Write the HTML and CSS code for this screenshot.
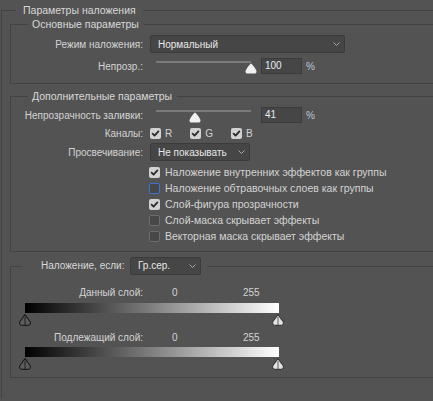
FILE: index.html
```html
<!DOCTYPE html>
<html lang="ru">
<head>
<meta charset="utf-8">
<title>Параметры наложения</title>
<link rel="stylesheet" href="styles.css">
</head>
<body>
<div class="dialog">
  <fieldset class="group outer">
    <legend class="legend legend-outer">Параметры наложения</legend>

    <fieldset class="group box box-general">
      <legend class="legend legend-box">Основные параметры</legend>
      <div class="row row-mode">
        <span class="label">Режим наложения:</span>
        <div class="select select-mode">
          <span>Нормальный</span>
          <svg class="chev" width="7" height="4" viewBox="0 0 7 4"><path d="M0.5 0.5 L3.5 3.5 L6.5 0.5" fill="none" stroke="#a9a9a9" stroke-width="1"/></svg>
        </div>
      </div>
      <div class="row row-slider">
        <span class="label">Непрозр.:</span>
        <div class="slider">
          <svg class="thumb" style="left:100%" width="12" height="11" viewBox="0 0 12 11"><path d="M6 0.5 C6.6 0.5 11.5 6.5 11.5 8.5 C11.5 10 10.6 10.5 9.5 10.5 L2.5 10.5 C1.4 10.5 0.5 10 0.5 8.5 C0.5 6.5 5.4 0.5 6 0.5Z" fill="#f0f0f0"/></svg>
        </div>
        <div class="field">100</div>
        <span class="unit">%</span>
      </div>
    </fieldset>

    <fieldset class="group box box-advanced">
      <legend class="legend legend-box">Дополнительные параметры</legend>
      <div class="row row-slider row-fill">
        <span class="label">Непрозрачность заливки:</span>
        <div class="slider">
          <svg class="thumb" style="left:41%" width="12" height="11" viewBox="0 0 12 11"><path d="M6 0.5 C6.6 0.5 11.5 6.5 11.5 8.5 C11.5 10 10.6 10.5 9.5 10.5 L2.5 10.5 C1.4 10.5 0.5 10 0.5 8.5 C0.5 6.5 5.4 0.5 6 0.5Z" fill="#f0f0f0"/></svg>
        </div>
        <div class="field">41</div>
        <span class="unit">%</span>
      </div>
      <div class="row row-channels">
        <span class="label">Каналы:</span>
        <div class="checks">
          <label class="check-item"><span class="cb on"><svg width="11" height="11" viewBox="0 0 11 11"><path d="M2.6 5.6 L4.6 7.6 L8.4 3.4" fill="none" stroke="#2a2a2a" stroke-width="1.8" stroke-linecap="round" stroke-linejoin="round"/></svg></span>R</label>
          <label class="check-item"><span class="cb on"><svg width="11" height="11" viewBox="0 0 11 11"><path d="M2.6 5.6 L4.6 7.6 L8.4 3.4" fill="none" stroke="#2a2a2a" stroke-width="1.8" stroke-linecap="round" stroke-linejoin="round"/></svg></span>G</label>
          <label class="check-item"><span class="cb on"><svg width="11" height="11" viewBox="0 0 11 11"><path d="M2.6 5.6 L4.6 7.6 L8.4 3.4" fill="none" stroke="#2a2a2a" stroke-width="1.8" stroke-linecap="round" stroke-linejoin="round"/></svg></span>B</label>
        </div>
      </div>
      <div class="row row-knockout">
        <span class="label">Просвечивание:</span>
        <div class="select select-knockout">
          <span>Не показывать</span>
          <svg class="chev" width="7" height="4" viewBox="0 0 7 4"><path d="M0.5 0.5 L3.5 3.5 L6.5 0.5" fill="none" stroke="#a9a9a9" stroke-width="1"/></svg>
        </div>
      </div>
      <div class="options">
        <label class="opt"><span class="cb on"><svg width="11" height="11" viewBox="0 0 11 11"><path d="M2.6 5.6 L4.6 7.6 L8.4 3.4" fill="none" stroke="#2a2a2a" stroke-width="1.8" stroke-linecap="round" stroke-linejoin="round"/></svg></span>Наложение внутренних эффектов как группы</label>
        <label class="opt"><span class="cb off focus"></span>Наложение обтравочных слоев как группы</label>
        <label class="opt"><span class="cb on"><svg width="11" height="11" viewBox="0 0 11 11"><path d="M2.6 5.6 L4.6 7.6 L8.4 3.4" fill="none" stroke="#2a2a2a" stroke-width="1.8" stroke-linecap="round" stroke-linejoin="round"/></svg></span>Слой-фигура прозрачности</label>
        <label class="opt"><span class="cb off"></span>Слой-маска скрывает эффекты</label>
        <label class="opt"><span class="cb off"></span>Векторная маска скрывает эффекты</label>
      </div>
    </fieldset>

    <fieldset class="group box box-blendif">
      <legend class="legend legend-blend">
        <span class="blend-inner">
          <span class="blend-label">Наложение, если:</span>
          <span class="select select-gray">
            <span>Гр.сер.</span>
            <svg class="chev" width="7" height="4" viewBox="0 0 7 4"><path d="M0.5 0.5 L3.5 3.5 L6.5 0.5" fill="none" stroke="#a9a9a9" stroke-width="1"/></svg>
          </span>
        </span>
      </legend>

      <div class="row row-level row-level-first">
        <span class="label">Данный слой:</span>
        <span class="val0">0</span>
        <span class="val255">255</span>
      </div>
      <div class="gradient"></div>
      <div class="thumbs">
        <svg width="12" height="12" viewBox="0 0 12 12"><path d="M6 0.6 L11.4 8 C11.6 10.2 10.6 11.4 9 11.4 L3 11.4 C1.4 11.4 0.4 10.2 0.6 8 Z" fill="#5c5c5c" stroke="#1c1c1c" stroke-width="1.1" stroke-linejoin="round"/><path d="M6 3 V11" stroke="#202020" stroke-width="1"/></svg>
        <svg width="12" height="12" viewBox="0 0 12 12"><path d="M6 0.6 L11.4 8 C11.6 10.2 10.6 11.4 9 11.4 L3 11.4 C1.4 11.4 0.4 10.2 0.6 8 Z" fill="#e4e4e4" stroke="#3a3a3a" stroke-width="1.1" stroke-linejoin="round"/><path d="M6 3 V11" stroke="#5a5a5a" stroke-width="1"/></svg>
      </div>

      <div class="row row-level">
        <span class="label">Подлежащий слой:</span>
        <span class="val0">0</span>
        <span class="val255">255</span>
      </div>
      <div class="gradient gradient-second"></div>
      <div class="thumbs">
        <svg width="12" height="12" viewBox="0 0 12 12"><path d="M6 0.6 L11.4 8 C11.6 10.2 10.6 11.4 9 11.4 L3 11.4 C1.4 11.4 0.4 10.2 0.6 8 Z" fill="#5c5c5c" stroke="#1c1c1c" stroke-width="1.1" stroke-linejoin="round"/><path d="M6 3 V11" stroke="#202020" stroke-width="1"/></svg>
        <svg width="12" height="12" viewBox="0 0 12 12"><path d="M6 0.6 L11.4 8 C11.6 10.2 10.6 11.4 9 11.4 L3 11.4 C1.4 11.4 0.4 10.2 0.6 8 Z" fill="#e4e4e4" stroke="#3a3a3a" stroke-width="1.1" stroke-linejoin="round"/><path d="M6 3 V11" stroke="#5a5a5a" stroke-width="1"/></svg>
      </div>
    </fieldset>
  </fieldset>
</div>
</body>
</html>
```

FILE: styles.css
```css
html, body {
  margin: 0;
  padding: 0;
  background: #535353;
  overflow: hidden;
}

body {
  width: 433px;
  height: 401px;
  font-family: "Liberation Sans", Arial, sans-serif;
  font-size: 10px;
  color: #d4d4d4;
}

.dialog {
  width: 433px;
}

.group {
  margin: 0;
  padding: 0;
  min-width: 0;
  border: 1px solid #434343;
  border-right: none;
}

.outer {
  margin: 3px 0 0 1px;
  padding: 0 0 20px 8px;
  border-bottom: none;
}

.legend {
  height: 14px;
  line-height: 14px;
  padding: 0;
  font-size: 10.5px;
  color: #d8d8d8;
  white-space: nowrap;
}

.legend-outer {
  margin-left: 6px;
  padding: 0 7px;
}

.legend-box {
  margin-left: 17px;
  padding: 0 5px 0 4px;
}

.box-general {
  padding-bottom: 9px;
}

.box-advanced {
  margin-top: 5px;
  padding-bottom: 7px;
}

.box-blendif {
  margin-top: 5px;
  padding-bottom: 7px;
}

.row {
  display: flex;
  align-items: center;
}

.label {
  flex: none;
  width: 132px;
  text-align: right;
  white-space: nowrap;
}

.row-mode {
  margin-top: 4px;
  height: 18px;
}

.select {
  box-sizing: border-box;
  height: 18px;
  display: flex;
  align-items: center;
  justify-content: space-between;
  padding: 0 4px 0 7px;
  background: #464646;
  border: 1px solid #3b3b3b;
  border-radius: 2px;
  color: #e8e8e8;
  white-space: nowrap;
}

.chev {
  flex: none;
}

.select-mode {
  width: 195px;
  margin-left: 7px;
}

.row-slider {
  margin-top: 5px;
  height: 16px;
}

.row-fill {
  margin-top: 4px;
}

.slider {
  position: relative;
  flex: none;
  width: 95px;
  height: 16px;
  margin-left: 13px;
}

.slider::before {
  content: "";
  position: absolute;
  left: 0;
  right: 0;
  top: 3px;
  height: 2px;
  background: #7a7a7a;
}

.thumb {
  position: absolute;
  top: 5px;
  margin-left: -6px;
}

.field {
  box-sizing: border-box;
  flex: none;
  width: 41px;
  height: 16px;
  margin-left: 10px;
  padding-left: 3px;
  line-height: 14px;
  background: #464646;
  border: 1px solid #3b3b3b;
  color: #e6edf8;
}

.unit {
  margin-left: 4px;
  color: #bcc8da;
}

.row-channels {
  margin-top: 3px;
  height: 14px;
}

.checks {
  display: flex;
  gap: 18px;
  margin-left: 7px;
}

.check-item {
  display: flex;
  align-items: center;
  gap: 4px;
}

.cb {
  box-sizing: border-box;
  flex: none;
  width: 11px;
  height: 11px;
  border-radius: 2px;
  display: flex;
}

.cb.on {
  background: #d2d2d2;
}

.cb.off {
  background: #474747;
  border: 1px solid #6c6c6c;
}

.cb.focus {
  border-color: #3b73d1;
}

.row-knockout {
  margin-top: 3px;
  height: 18px;
}

.select-knockout {
  width: 100px;
  margin-left: 7px;
}

.options {
  margin-top: 3px;
  padding-left: 138px;
}

.opt {
  display: flex;
  align-items: center;
  gap: 5px;
  height: 16px;
  font-size: 10.5px;
  white-space: nowrap;
}

.legend-blend {
  height: 18px;
  line-height: 18px;
  margin-left: 11px;
  padding: 0 6px 0 19px;
  font-size: 10px;
}

.blend-inner {
  display: flex;
  align-items: center;
}

.blend-label {
  width: 82px;
  text-align: right;
}

.select-gray {
  width: 71px;
  margin-left: 7px;
}

.row-level {
  margin-top: 4px;
  height: 14px;
}

.row-level-first {
  margin-top: 10px;
}

.val0 {
  width: 71px;
  margin-left: 29px;
}

.gradient {
  width: 254px;
  height: 10px;
  margin: 4px 0 0 14px;
  background: linear-gradient(to right, #000000, #ffffff);
}

.gradient-second {
  margin-top: 3px;
}

.thumbs {
  display: flex;
  justify-content: space-between;
  align-items: flex-end;
  width: 265px;
  height: 13px;
  margin-left: 8px;
}
```
